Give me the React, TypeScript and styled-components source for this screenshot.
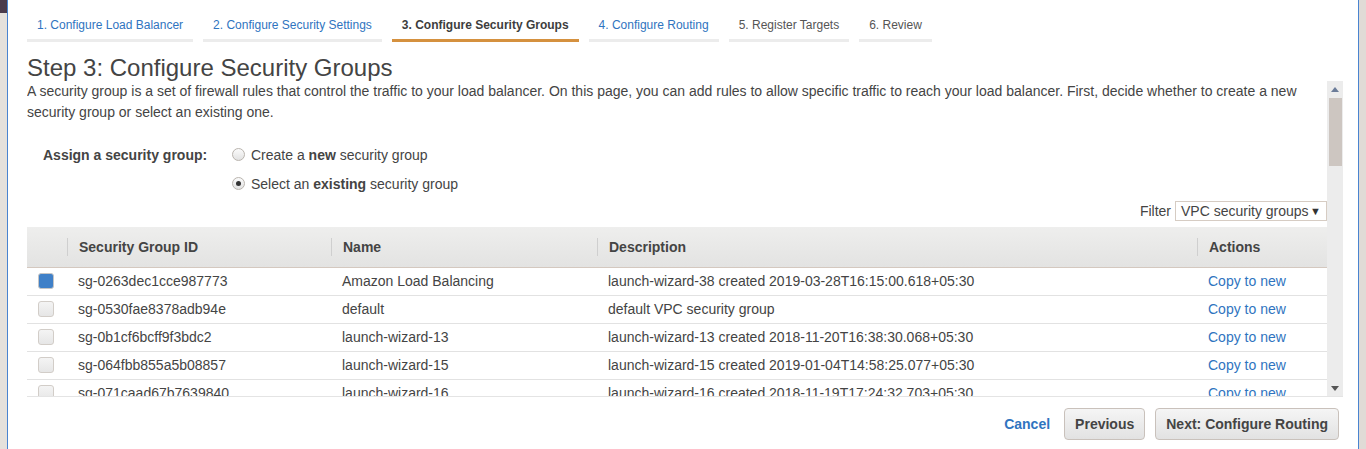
import React from "react";
import styled, { createGlobalStyle } from "styled-components";

const GlobalStyle = createGlobalStyle`
  html, body { margin: 0; padding: 0; background: #fff; }
  body {
    font-family: "Liberation Sans", Arial, Helvetica, sans-serif;
    color: #444;
  }
  * { box-sizing: border-box; }
`;

const LINK = "#2f74c0";

const Frame = styled.div`
  display: flex;
  width: 1366px;
  height: 449px;
  overflow: hidden;
`;

const LeftGutter = styled.div`
  flex: none;
  width: 8px;
  background: #e5e1dc;
  border-right: 1px solid #4a84d0;
  display: flex;
  flex-direction: column;
`;

const GutterCap = styled.div`
  height: 13px;
  background: #4b3b4b;
`;

const RightGutter = styled.div`
  flex: none;
  width: 8px;
  background: #e0dbd6;
  border-left: 1px solid #4a84d0;
`;

const Main = styled.main`
  flex: 1;
  min-width: 0;
  padding: 10px 15px 0 19px;
  display: flex;
  flex-direction: column;
`;

const Tabs = styled.nav`
  display: flex;
  gap: 10px;
`;

type TabState = "link" | "active" | "muted";

const Tab = styled.div<{ $state: TabState }>`
  padding: 1px 10px 0;
  height: 32px;
  line-height: 29px;
  font-size: 12px;
  white-space: nowrap;
  font-weight: ${(p) => (p.$state === "active" ? "bold" : "normal")};
  border-bottom: 3px solid ${(p) => (p.$state === "active" ? "#d5913f" : "#ececec")};
  color: ${(p) => (p.$state === "link" ? LINK : p.$state === "active" ? "#3d3d3d" : "#555")};
`;

const Heading = styled.h1`
  margin: 12px 0 0;
  font-size: 24px;
  line-height: 27px;
  font-weight: normal;
  color: #444;
`;

const ScrollArea = styled.section`
  display: flex;
  height: 316px;
  border-bottom: 1px solid #e4e4e4;
`;

const ScrollContent = styled.div`
  flex: 1;
  min-width: 0;
  overflow: hidden;
`;

const Intro = styled.p`
  margin: 0;
  font-size: 14px;
  line-height: 21px;
`;

const AssignGroup = styled.div`
  margin-top: 17px;
  padding-left: 16px;
  display: grid;
  grid-template-columns: 189px auto;
  grid-auto-rows: 29px;
  align-items: center;
  font-size: 14px;
`;

const AssignLabel = styled.div`
  font-weight: bold;
  grid-row: 1;
`;

const RadioOption = styled.label`
  grid-column: 2;
  display: flex;
  align-items: center;
  gap: 6px;
  color: #444;
`;

const RadioDot = styled.span<{ $checked?: boolean }>`
  width: 13px;
  height: 13px;
  border-radius: 50%;
  border: 1px solid #b9b4ae;
  background: linear-gradient(#fbfbfb, #e2e2e2);
  display: flex;
  align-items: center;
  justify-content: center;
  &::after {
    content: "";
    width: 5px;
    height: 5px;
    border-radius: 50%;
    background: ${(p) => (p.$checked ? "#333" : "transparent")};
  }
`;

const FilterBar = styled.div`
  margin-top: 3px;
  display: flex;
  justify-content: flex-end;
  align-items: center;
  gap: 4px;
  font-size: 14px;
`;

const SelectBox = styled.div`
  width: 152px;
  height: 20px;
  border: 1px solid #d6ccc3;
  padding: 0 5px;
  display: flex;
  align-items: center;
  justify-content: space-between;
  font-size: 14px;
  color: #444;
  background: #fff;
`;

const Caret = styled.span`
  font-size: 11px;
  color: #333;
`;

const Table = styled.div`
  margin-top: 6px;
  display: grid;
  grid-template-columns: 40px 264px 266px 600px 1fr;
  font-size: 14px;
`;

const HeaderCell = styled.div`
  height: 41px;
  display: flex;
  align-items: center;
  background: linear-gradient(#eeeeed, #e3e3e2);
  border-bottom: 1px solid #d4c8bf;
`;

const HeaderLabel = styled.span`
  border-left: 1px solid #cfcfcf;
  padding-left: 11px;
  line-height: 18px;
  font-weight: bold;
  color: #444;
`;

const Cell = styled.div<{ $link?: boolean }>`
  height: 28px;
  display: flex;
  align-items: center;
  padding: 0 0 1px 11px;
  border-bottom: 1px solid #e2e2e2;
  white-space: nowrap;
  overflow: hidden;
  color: ${(p) => (p.$link ? LINK : "#444")};
`;

const CheckBox = styled.span<{ $checked?: boolean }>`
  width: 16px;
  height: 16px;
  border-radius: 3px;
  border: 1px solid ${(p) => (p.$checked ? "#c5c5c5" : "#d2cdc8")};
  background: ${(p) => (p.$checked ? "#3f80c8" : "linear-gradient(#f4f4f4, #e6e6e6)")};
  box-shadow: ${(p) => (p.$checked ? "inset 0 0 0 1px #3f80c8" : "none")};
`;

const Scrollbar = styled.div`
  flex: none;
  width: 16px;
  background: #ececec;
  display: flex;
  flex-direction: column;
`;

const ScrollButton = styled.div`
  height: 16px;
  display: flex;
  align-items: center;
  justify-content: center;
`;

const ScrollTrack = styled.div`
  flex: 1;
  padding: 1px 1px 0 2px;
`;

const ScrollThumb = styled.div`
  height: 68px;
  background: #cdc6c1;
`;

const Footer = styled.footer`
  margin-top: 11px;
  padding-right: 4px;
  display: flex;
  justify-content: flex-end;
  align-items: center;
  gap: 10px;
`;

const CancelLink = styled.a`
  margin-right: 4px;
  font-size: 14px;
  font-weight: bold;
  color: ${LINK};
  text-decoration: none;
`;

const Button = styled.button`
  height: 32px;
  padding: 0 10px;
  border: 1px solid #c9c1bb;
  border-radius: 4px;
  background: linear-gradient(#f5f5f5, #e2e2e2);
  font-family: "Liberation Sans", Arial, sans-serif;
  font-size: 14px;
  font-weight: bold;
  color: #444;
`;

const Arrow = ({ up }: { up?: boolean }) => (
  <svg width="8" height="5" viewBox="0 0 8 5">
    <path d={up ? "M0 5 L4 0 L8 5 Z" : "M0 0 L8 0 L4 5 Z"} fill={up ? "#6b7c99" : "#555"} />
  </svg>
);

const tabs: { label: string; state: TabState }[] = [
  { label: "1. Configure Load Balancer", state: "link" },
  { label: "2. Configure Security Settings", state: "link" },
  { label: "3. Configure Security Groups", state: "active" },
  { label: "4. Configure Routing", state: "link" },
  { label: "5. Register Targets", state: "muted" },
  { label: "6. Review", state: "muted" },
];

const rows = [
  {
    id: "sg-0263dec1cce987773",
    name: "Amazon Load Balancing",
    desc: "launch-wizard-38 created 2019-03-28T16:15:00.618+05:30",
    checked: true,
  },
  { id: "sg-0530fae8378adb94e", name: "default", desc: "default VPC security group" },
  {
    id: "sg-0b1cf6bcff9f3bdc2",
    name: "launch-wizard-13",
    desc: "launch-wizard-13 created 2018-11-20T16:38:30.068+05:30",
  },
  {
    id: "sg-064fbb855a5b08857",
    name: "launch-wizard-15",
    desc: "launch-wizard-15 created 2019-01-04T14:58:25.077+05:30",
  },
  {
    id: "sg-071caad67b7639840",
    name: "launch-wizard-16",
    desc: "launch-wizard-16 created 2018-11-19T17:24:32.703+05:30",
  },
];

export default function App() {
  return (
    <>
      <GlobalStyle />
      <Frame>
        <LeftGutter>
          <GutterCap />
        </LeftGutter>
        <Main>
          <Tabs>
            {tabs.map((t) => (
              <Tab key={t.label} $state={t.state}>
                {t.label}
              </Tab>
            ))}
          </Tabs>
          <Heading>Step 3: Configure Security Groups</Heading>
          <ScrollArea>
            <ScrollContent>
              <Intro>
                A security group is a set of firewall rules that control the traffic to your load
                balancer. On this page, you can add rules to allow specific traffic to reach your
                load balancer. First, decide whether to create a new security group or select an
                existing one.
              </Intro>
              <AssignGroup>
                <AssignLabel>Assign a security group:</AssignLabel>
                <RadioOption>
                  <RadioDot />
                  <span>
                    Create a <b>new</b> security group
                  </span>
                </RadioOption>
                <RadioOption>
                  <RadioDot $checked />
                  <span>
                    Select an <b>existing</b> security group
                  </span>
                </RadioOption>
              </AssignGroup>
              <FilterBar>
                <span>Filter</span>
                <SelectBox>
                  <span>VPC security groups</span>
                  <Caret>▼</Caret>
                </SelectBox>
              </FilterBar>
              <Table>
                <HeaderCell />
                <HeaderCell>
                  <HeaderLabel>Security Group ID</HeaderLabel>
                </HeaderCell>
                <HeaderCell>
                  <HeaderLabel>Name</HeaderLabel>
                </HeaderCell>
                <HeaderCell>
                  <HeaderLabel>Description</HeaderLabel>
                </HeaderCell>
                <HeaderCell>
                  <HeaderLabel>Actions</HeaderLabel>
                </HeaderCell>
                {rows.map((r) => (
                  <React.Fragment key={r.id}>
                    <Cell>
                      <CheckBox $checked={r.checked} />
                    </Cell>
                    <Cell>{r.id}</Cell>
                    <Cell>{r.name}</Cell>
                    <Cell>{r.desc}</Cell>
                    <Cell $link>Copy to new</Cell>
                  </React.Fragment>
                ))}
              </Table>
            </ScrollContent>
            <Scrollbar>
              <ScrollButton>
                <Arrow up />
              </ScrollButton>
              <ScrollTrack>
                <ScrollThumb />
              </ScrollTrack>
              <ScrollButton>
                <Arrow />
              </ScrollButton>
            </Scrollbar>
          </ScrollArea>
          <Footer>
            <CancelLink href="#">Cancel</CancelLink>
            <Button>Previous</Button>
            <Button>Next: Configure Routing</Button>
          </Footer>
        </Main>
        <RightGutter />
      </Frame>
    </>
  );
}
